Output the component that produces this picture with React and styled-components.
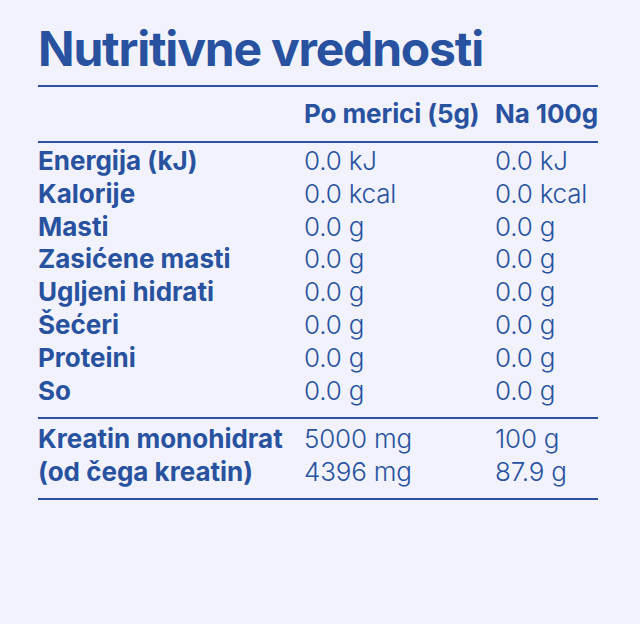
import React from "react";
import styled, { createGlobalStyle } from "styled-components";

const GlobalStyle = createGlobalStyle`
  html, body {
    margin: 0;
    padding: 0;
    background: #f1f2fb;
  }
  body {
    font-family: Inter, "Liberation Sans", sans-serif;
    color: #28529f;
  }
`;

const Page = styled.div`
  width: 640px;
  height: 624px;
  box-sizing: border-box;
  padding: 21px 42px 0 38px;
`;

const Title = styled.h1`
  margin: 0;
  font-size: 48px;
  font-weight: 700;
  line-height: 56px;
  letter-spacing: -1.2px;
  padding-bottom: 8px;
  border-bottom: 2px solid #28529f;
`;

const Section = styled.div`
  display: grid;
  grid-template-columns: 266px 191px 1fr;
  padding: ${(p) => p.$pad || "0"};
  border-bottom: 2px solid #28529f;
`;

const Cell = styled.div`
  font-size: 26px;
  line-height: ${(p) => p.$lh || "32.8px"};
  font-weight: ${(p) => (p.$bold ? 700 : 300)};
  letter-spacing: ${(p) => (p.$bold ? "0" : "-0.2px")};
  white-space: nowrap;
`;

const HeadCell = styled(Cell)`
  font-weight: 700;
  letter-spacing: -0.1px;
  line-height: 54px;
`;

const nutrients = [
  ["Energija (kJ)", "0.0 kJ", "0.0 kJ"],
  ["Kalorije", "0.0 kcal", "0.0 kcal"],
  ["Masti", "0.0 g", "0.0 g"],
  ["Zasićene masti", "0.0 g", "0.0 g"],
  ["Ugljeni hidrati", "0.0 g", "0.0 g"],
  ["Šećeri", "0.0 g", "0.0 g"],
  ["Proteini", "0.0 g", "0.0 g"],
  ["So", "0.0 g", "0.0 g"],
];

const creatine = [
  ["Kreatin monohidrat", "5000 mg", "100 g"],
  ["(od čega kreatin)", "4396 mg", "87.9 g"],
];

const Rows = ({ data, lh }) =>
  data.map(([label, a, b]) => (
    <React.Fragment key={label}>
      <Cell $bold $lh={lh}>{label}</Cell>
      <Cell $lh={lh}>{a}</Cell>
      <Cell $lh={lh}>{b}</Cell>
    </React.Fragment>
  ));

const App = () => (
  <Page>
    <GlobalStyle />
    <Title>Nutritivne vrednosti</Title>
    <Section>
      <HeadCell />
      <HeadCell>Po merici (5g)</HeadCell>
      <HeadCell>Na 100g</HeadCell>
    </Section>
    <Section $pad="2px 0 10px">
      <Rows data={nutrients} />
    </Section>
    <Section $pad="4px 0 10px">
      <Rows data={creatine} lh="32.4px" />
    </Section>
  </Page>
);

export default App;
